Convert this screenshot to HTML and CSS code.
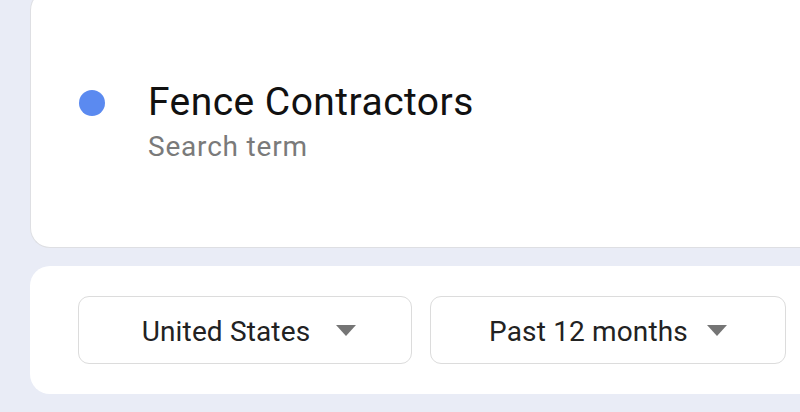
FILE: index.html
```html
<!DOCTYPE html>
<html>
<head>
<meta charset="utf-8">
<link rel="stylesheet" href="styles.css">
</head>
<body>
<main class="page">
  <section class="card term-card">
    <span class="dot"></span>
    <div class="term-text">
      <div class="term-title">Fence Contractors</div>
      <div class="term-sub">Search term</div>
    </div>
  </section>
  <section class="card filter-card">
    <button class="select select-geo"><span class="select-label">United States</span><span class="caret"></span></button>
    <button class="select select-time"><span class="select-label">Past 12 months</span><span class="caret"></span></button>
  </section>
</main>
</body>
</html>
```
FILE: styles.css
```css
html, body {
  margin: 0;
  padding: 0;
  background: #e9ecf6;
  overflow: hidden;
  width: 800px;
  height: 412px;
}
.page {
  display: flex;
  flex-direction: column;
  gap: 18px;
  margin-top: -10px;
  padding-left: 30px;
  font-family: Roboto, "Open Sans", sans-serif;
}
.card {
  background: #fff;
  border-radius: 20px;
  width: 770px;
  box-sizing: border-box;
}
.term-card {
  height: 258px;
  border: 1px solid #dedfe3;
  border-right: none;
  border-top-right-radius: 0;
  border-bottom-right-radius: 0;
  display: flex;
  align-items: center;
  padding-left: 48px;
  gap: 43px;
  padding-top: 4px;
}
.dot {
  width: 26px;
  height: 26px;
  border-radius: 50%;
  background: #5b8af0;
  flex: none;
  margin-top: -36px;
}
.term-title {
  font-size: 39px;
  letter-spacing: 0.45px;
  color: #111;
  line-height: 46px;
}
.term-sub {
  font-size: 28px;
  letter-spacing: 0.8px;
  color: #7a7a7a;
  line-height: 34px;
  margin-top: 5px;
}
.filter-card {
  height: 128px;
  display: flex;
  align-items: center;
  padding-left: 48px;
  gap: 18px;
  border-top-right-radius: 0;
  border-bottom-right-radius: 0;
}
.select {
  height: 68px;
  border: 1.5px solid #dcdcdc;
  border-radius: 11px;
  background: #fff;
  display: flex;
  align-items: center;
  justify-content: center;
  font-family: inherit;
  font-size: 28px;
  letter-spacing: 0.15px;
  color: #222;
  padding: 3px 0 0;
  box-sizing: border-box;
}
.select-geo { width: 334px; padding-left: 8px; gap: 26px; }
.select-time { width: 356px; gap: 19px; }
.caret {
  width: 0;
  height: 0;
  border-left: 10px solid transparent;
  border-right: 10px solid transparent;
  border-top: 11px solid #757575;
  margin-top: -2px;
}
```
